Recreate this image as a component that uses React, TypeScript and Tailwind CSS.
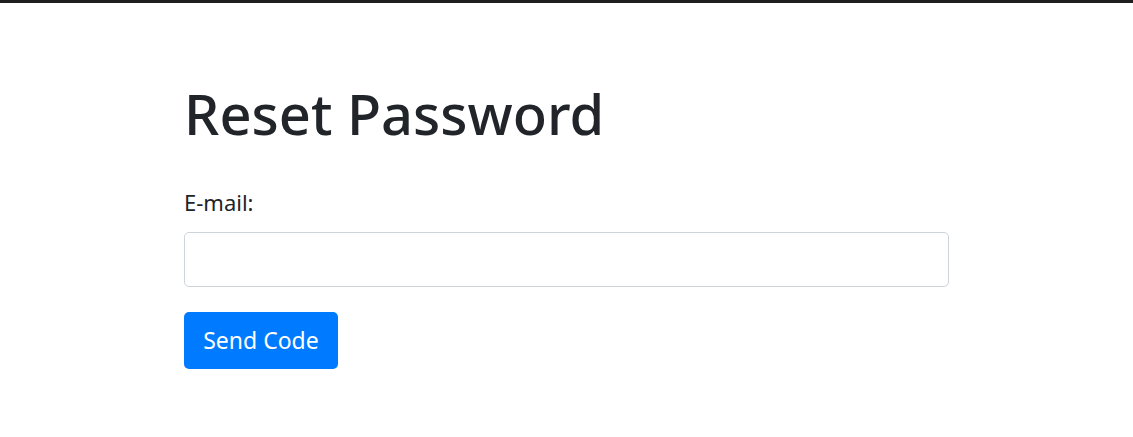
import React from 'react';

const App: React.FC = () => {
  return (
    <div className="min-h-[437px] bg-white text-[#212529]" style={{ fontFamily: '"Noto Sans", "Open Sans", sans-serif' }}>
      <div className="h-[3px] bg-[#1f1f1f]" />
      <div className="mx-auto w-[765px] pt-[74px]">
        <h1 className="text-[56px] leading-[72px] font-medium text-[#212529]">Reset Password</h1>
        <form className="mt-[38px]" onSubmit={(e) => e.preventDefault()}>
          <label htmlFor="email" className="block text-[22px] leading-[30px] text-[#212529]">
            E-mail:
          </label>
          <input
            id="email"
            type="email"
            className="mt-[15px] block h-[55px] w-full rounded-[5px] border border-[#ced4da] bg-white px-4 text-[22px] outline-none"
          />
          <button
            type="submit"
            className="mt-[25px] h-[57px] w-[154px] rounded-[5px] bg-[#007bff] text-[23px] text-white"
          >
            Send Code
          </button>
        </form>
      </div>
    </div>
  );
};

export default App;
